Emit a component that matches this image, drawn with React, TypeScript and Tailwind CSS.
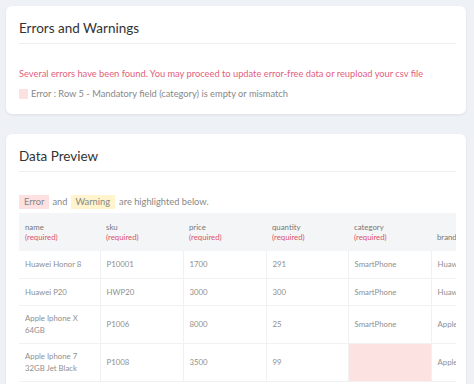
import React from "react";

type Row = {
  name: string;
  sku: string;
  price: string;
  quantity: string;
  category: string;
  brand: string;
  error?: "category";
};

const columns = [
  { key: "name", label: "name", required: true, width: "w-[81px]" },
  { key: "sku", label: "sku", required: true, width: "w-[83px]" },
  { key: "price", label: "price", required: true, width: "w-[83px]" },
  { key: "quantity", label: "quantity", required: true, width: "w-[82px]" },
  { key: "category", label: "category", required: true, width: "w-[83px]" },
  { key: "brand", label: "brand", required: false, width: "w-[80px]" },
] as const;

const rows: Row[] = [
  { name: "Huawei Honor 8", sku: "P10001", price: "1700", quantity: "291", category: "SmartPhone", brand: "Huawei" },
  { name: "Huawei P20", sku: "HWP20", price: "3000", quantity: "300", category: "SmartPhone", brand: "Huawei" },
  { name: "Apple Iphone X\n64GB", sku: "P1006", price: "8000", quantity: "25", category: "SmartPhone", brand: "Apple" },
  { name: "Apple Iphone 7\n32GB Jet Black", sku: "P1008", price: "3500", quantity: "99", category: "", brand: "Apple", error: "category" },
];

const Card = ({ title, children, className = "" }: { title: string; children: React.ReactNode; className?: string }) => (
  <div className={`ml-[6px] w-[460px] rounded-md bg-white pl-[13px] pr-[10px] shadow-[0_1px_3px_rgba(0,0,0,0.08)] ${className}`}>
    <div className="border-b border-[#eceef1] pt-[13px] pb-[6px]">
      <h2 className="text-[13.5px] leading-[18px] text-[#333]">{title}</h2>
    </div>
    {children}
  </div>
);

export default function App() {
  return (
    <div className="h-[384px] w-[474px] overflow-hidden bg-[#eef1f5] pt-[6px] font-['Lato',sans-serif] text-[9.3px]">
      {/* Errors */}
      <Card title="Errors and Warnings" className="pb-[13px]">
        <p className="mt-[23px] whitespace-nowrap leading-[14px] text-[#e2607b]">
          Several errors have been found. You may proceed to update error-free data or reupload your csv file
        </p>
        <div className="mt-[6px] flex items-center leading-[14px] text-[#888]">
          <span className="mr-[3px] inline-block h-[10px] w-[9px] bg-[#fde0e0]" />
          Error : Row 5 - Mandatory field (category) is empty or mismatch
        </div>
      </Card>

      {/* Preview */}
      <Card title="Data Preview" className="mt-[20px] pb-4">
        <div className="mt-[23px] flex items-center leading-[14px] text-[#888]">
          <span className="bg-[#fde0e0] px-[5px]">Error</span>
          <span className="mx-[3px]">and</span>
          <span className="bg-[#fff4cc] px-[5px]">Warning</span>
          <span className="ml-[4px]">are highlighted below.</span>
        </div>
        <div className="mt-[4px] w-[437px] overflow-hidden">
          <table className="w-[492px] table-fixed border-collapse text-left text-[7.8px] leading-[12px]">
            <thead>
              <tr className="h-[38px] bg-[#f4f5f6]">
                {columns.map((c) => (
                  <th key={c.key} className={`${c.width} px-[6px] pb-[9px] align-bottom font-normal text-[#777]`}>
                    <div className="leading-[10px]">{c.label}</div>
                    {c.required && <div className="leading-[10px] text-[#d9546a]">(required)</div>}
                  </th>
                ))}
              </tr>
            </thead>
            <tbody>
              {rows.map((r, i) => (
                <tr key={i} className={`border-b border-[#f0f1f3] ${i < 2 ? "h-[27px]" : "h-[38px]"}`}>
                  {columns.map((c) => (
                    <td
                      key={c.key}
                      className={`border-r border-[#f0f1f3] px-[6px] align-middle whitespace-pre text-[#8f8f8f] ${
                        r.error === c.key ? "bg-[#fde2e2]" : ""
                      }`}
                    >
                      {r[c.key]}
                    </td>
                  ))}
                </tr>
              ))}
            </tbody>
          </table>
        </div>
      </Card>
    </div>
  );
}
